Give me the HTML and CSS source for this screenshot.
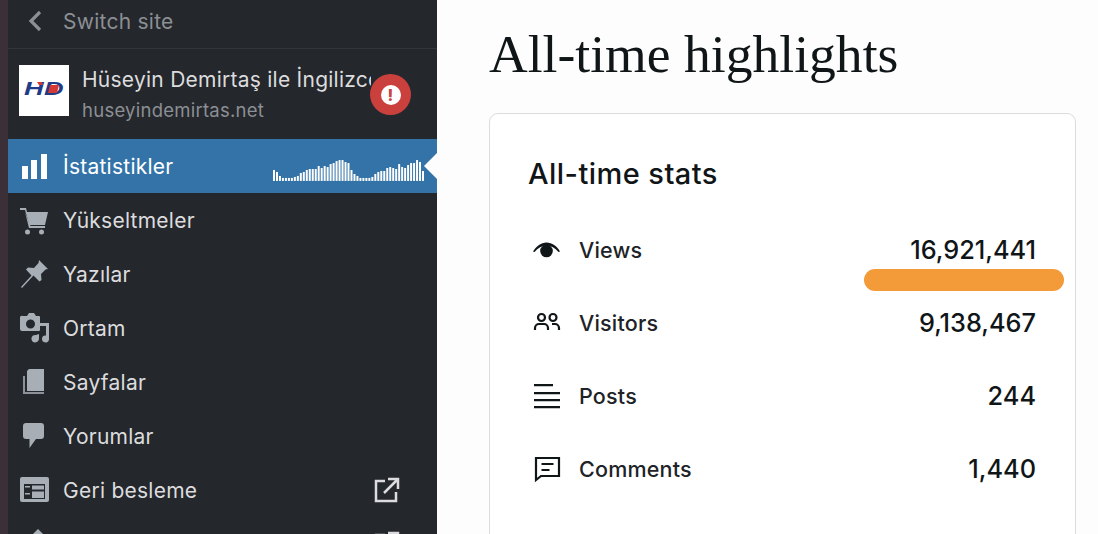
FILE: index.html
```html
<!DOCTYPE html>
<html lang="tr">
<head>
<meta charset="utf-8">
<title>All-time highlights</title>
<link rel="stylesheet" href="styles.css">
</head>
<body>
<div class="strip"></div>
<nav class="sidebar">
  <div class="switch">
    <svg class="chev" viewBox="0 0 14 22"><path d="M12 2 3 11l9 9" fill="none" stroke="currentColor" stroke-width="3.200"/></svg>
    <span>Switch site</span>
  </div>
  <div class="site">
    <div class="logo">
      <svg viewBox="0 0 50 51" class="logo-svg"><text x="5" y="30" textLength="40" lengthAdjust="spacingAndGlyphs" class="logo-text">HD</text><path d="M31 20h9l-2 8h-9zM18 17h5l1 3h-4z" fill="#d43a35"/></svg>
    </div>
    <div class="site-text">
      <div class="site-name">Hüseyin Demirtaş ile İngilizce</div>
      <div class="site-url">huseyindemirtas.net</div>
    </div>
    <div class="alert"><span class="alert-dot">!</span></div>
  </div>
  <div class="item active">
    <svg class="ico" viewBox="0 0 30 30"><path d="M2 15h6v13H2zM11 9h6v19h-6zM21 3h6v25h-6z" fill="#fff"/></svg>
    <span class="label">İstatistikler</span>
    <svg class="spark" viewBox="0 0 152 22" fill="#fff">
      <rect x="0" y="11" width="2" height="11"/><rect x="3" y="13" width="2" height="9"/><rect x="6" y="17" width="2" height="5"/><rect x="9" y="19" width="2" height="3"/><rect x="12" y="19" width="2" height="3"/><rect x="15" y="19" width="2" height="3"/><rect x="18" y="19" width="2" height="3"/><rect x="21" y="18" width="2" height="4"/><rect x="24" y="17" width="2" height="5"/><rect x="27" y="14" width="2" height="8"/><rect x="30" y="13" width="2" height="9"/><rect x="33" y="11" width="2" height="11"/><rect x="36" y="10" width="2" height="12"/><rect x="39" y="10" width="2" height="12"/><rect x="42" y="10" width="2" height="12"/><rect x="45" y="7" width="2" height="15"/><rect x="48" y="9" width="2" height="13"/><rect x="51" y="7" width="2" height="15"/><rect x="54" y="8" width="2" height="14"/><rect x="57" y="5" width="2" height="17"/><rect x="60" y="4" width="2" height="18"/><rect x="63" y="2" width="2" height="20"/><rect x="66" y="1" width="2" height="21"/><rect x="69" y="1" width="2" height="21"/><rect x="72" y="3" width="2" height="19"/><rect x="75" y="4" width="2" height="18"/><rect x="78" y="11" width="2" height="11"/><rect x="81" y="15" width="2" height="7"/><rect x="84" y="17" width="2" height="5"/><rect x="87" y="19" width="2" height="3"/><rect x="90" y="19" width="2" height="3"/><rect x="93" y="19" width="2" height="3"/><rect x="96" y="19" width="2" height="3"/><rect x="99" y="18" width="2" height="4"/><rect x="102" y="15" width="2" height="7"/><rect x="105" y="13" width="2" height="9"/><rect x="108" y="12" width="2" height="10"/><rect x="111" y="12" width="2" height="10"/><rect x="114" y="9" width="2" height="13"/><rect x="117" y="8" width="2" height="14"/><rect x="120" y="9" width="2" height="13"/><rect x="123" y="10" width="2" height="12"/><rect x="126" y="5" width="2" height="17"/><rect x="129" y="8" width="2" height="14"/><rect x="132" y="9" width="2" height="13"/><rect x="135" y="6" width="2" height="16"/><rect x="138" y="4" width="2" height="18"/><rect x="141" y="4" width="2" height="18"/><rect x="144" y="1" width="2" height="21"/><rect x="147" y="3" width="2" height="19"/><rect x="150" y="12" width="2" height="10"/>
    </svg>
    <span class="notch"></span>
  </div>
  <div class="item">
    <svg class="ico" viewBox="0 0 30 30"><path d="M0 3h6l1 4h21l-3 13H9.500L5 5H0z" fill="currentColor"/><path d="M5 7 9 23h16v-2H10.500" fill="currentColor"/><circle cx="7.500" cy="27" r="2.500" fill="currentColor"/><circle cx="21.500" cy="27" r="2.500" fill="currentColor"/></svg>
    <span class="label">Yükseltmeler</span>
  </div>
  <div class="item">
    <svg class="ico" viewBox="0 0 30 30"><path d="M19 1l9 9-2.500.5L21 15l.5 6-2 1.500-6-6L2 29l-1-1 10.500-11.500L6 10.500 8 8.500l6 .5 4.500-5z" fill="currentColor"/></svg>
    <span class="label">Yazılar</span>
  </div>
  <div class="item">
    <svg class="ico" viewBox="0 0 30 30"><path fill-rule="evenodd" d="M3 3h4l2-3h5l2 3h3a1 1 0 0 1 1 1v13a1 1 0 0 1-1 1H2a2 2 0 0 1-2-2V5a2 2 0 0 1 3-2zm7.500 3.500a4.500 4.500 0 1 0 0 9 4.500 4.500 0 0 0 0-9z" fill="currentColor"/><path d="M20 10h9v16a3.500 3.500 0 1 1-3-3.500V13h-6z" fill="currentColor"/><path d="M19 21v4.500a3.800 3.800 0 1 1-3-3.500z" fill="currentColor"/></svg>
    <span class="label">Ortam</span>
  </div>
  <div class="item">
    <svg class="ico" viewBox="0 0 30 30"><path d="M9 2h15v22H7V4z" fill="currentColor"/><path d="M3 9h2v16h19v2H3z" fill="currentColor" opacity=".8"/></svg>
    <span class="label">Sayfalar</span>
  </div>
  <div class="item">
    <svg class="ico" viewBox="0 0 30 30"><path d="M6 2h15a3 3 0 0 1 3 3v10a3 3 0 0 1-3 3h-5l-6.500 9v-9H6a3 3 0 0 1-3-3V5a3 3 0 0 1 3-3z" fill="currentColor"/></svg>
    <span class="label">Yorumlar</span>
  </div>
  <div class="item">
    <svg class="ico" viewBox="0 0 30 30"><rect x="0" y="2" width="29" height="25" rx="2" fill="currentColor"/><rect x="4" y="9" width="21" height="15" fill="#24272c"/><path d="M12 10.500h12v4H12zM12 16.500h12V23H12zM5 11h5v1.500H5zM5 18h5v1.500H5z" fill="currentColor"/></svg>
    <span class="label">Geri besleme</span>
    <svg class="ext" viewBox="0 0 26 26"><path d="M11 4H2v20h20v-9M14 2h10v10M24 2 10 16" fill="none" stroke="currentColor" stroke-width="2.500"/></svg>
  </div>
  <div class="item">
    <svg class="ico" viewBox="0 0 30 30"><path d="M18 0l7 7-5 5-7-7z" fill="currentColor"/></svg>
    <span class="label"></span>
    <svg class="ext" viewBox="0 0 26 26"><path d="M11 4H2v20h20v-9M14 2h10v10M24 2 10 16" fill="none" stroke="currentColor" stroke-width="2.500"/></svg>
  </div>
</nav>
<main class="main">
  <h1 class="title">All-time highlights</h1>
  <section class="card">
    <h2 class="card-title">All-time stats</h2>
    <div class="row">
      <svg class="row-ico" viewBox="0 0 28 28"><path d="M0 15.500C3.500 10 8 6.500 13.500 6.500S24 10 27 15.500l-1.500.5C22 12 18 9.500 13.500 9.500S5 12 1.500 16z" fill="#101517"/><circle cx="13.500" cy="15" r="6.300" fill="#101517"/></svg>
      <span class="row-label">Views</span>
      <span class="row-value">16,921,441</span>
      <span class="redact"></span>
    </div>
    <div class="row">
      <svg class="row-ico" viewBox="0 0 28 28" fill="none" stroke="#101517" stroke-width="2.200"><circle cx="8.500" cy="8.500" r="3.500"/><circle cx="20" cy="8.500" r="3.500"/><path d="M2 21v-2a4 4 0 0 1 4-4h5a4 4 0 0 1 4 4v2M19 15h3a4 4 0 0 1 4 4v2"/></svg>
      <span class="row-label">Visitors</span>
      <span class="row-value">9,138,467</span>
    </div>
    <div class="row">
      <svg class="row-ico" viewBox="0 0 28 28" fill="#101517"><path d="M1 2h19v2.200H1zM1 10h26v2.200H1zM1 17h26v2.200H1zM1 24h26v2.200H1z"/></svg>
      <span class="row-label">Posts</span>
      <span class="row-value">244</span>
    </div>
    <div class="row">
      <svg class="row-ico" viewBox="0 0 28 28" fill="none" stroke="#101517" stroke-width="2.200"><path d="M3 3h23v18H8l-5 4z"/><path d="M8.500 9h12M8.500 15h8"/></svg>
      <span class="row-label">Comments</span>
      <span class="row-value">1,440</span>
    </div>
  </section>
</main>
</body>
</html>
```
FILE: styles.css
```css
* { box-sizing: border-box; }
html, body { margin: 0; height: 534px; overflow: hidden; }
body {
  display: flex;
  width: 1098px;
  background: #fdfdfd;
  font-family: Inter, "Liberation Sans", sans-serif;
}
.strip { width: 8px; flex: none; background: #3b2f38; }
.sidebar {
  width: 429px;
  flex: none;
  height: 534px;
  overflow: hidden;
  background: #24272c;
  color: #dcdcde;
  font-size: 21px;
  letter-spacing: .25px;
}
.switch {
  height: 49px;
  display: flex;
  align-items: center;
  padding: 0 0 6px 20px;
  gap: 21px;
  border-bottom: 1px solid #33353a;
  color: #8c8f94;
}
.chev { width: 14px; height: 22px; flex: none; }
.site {
  height: 90px;
  display: flex;
  align-items: center;
  padding-left: 11px;
  position: relative;
  padding-bottom: 2px;
}
.logo { width: 50px; height: 51px; background: #fff; flex: none; margin-bottom: 6px; }
.logo-svg { display: block; width: 50px; height: 51px; }
.logo-text {
  font-family: "Liberation Sans", sans-serif;
  font-size: 19px;
  font-weight: 700;
  font-style: italic;
  fill: #1f3c88;
}
.site-text { margin: 3px 0 0 13px; width: 289px; overflow: hidden; white-space: nowrap; }
.site-name { color: #dcdcde; line-height: 29px; }
.site-url { color: #8c8f94; font-size: 18.500px; line-height: 27px; margin-top: 3px; }
.alert {
  position: absolute;
  left: 362px;
  top: 25px;
  width: 41px;
  height: 41px;
  border-radius: 50%;
  background: #c9403d;
  display: flex;
  align-items: center;
  justify-content: center;
}
.alert-dot {
  width: 20px;
  height: 20px;
  border-radius: 50%;
  background: #fff;
  color: #c9403d;
  font-size: 16px;
  font-weight: 800;
  line-height: 20px;
  text-align: center;
}
.item {
  height: 54px;
  display: flex;
  align-items: center;
  padding-left: 12px;
  position: relative;
  color: #a7aeb6;
}
.item .label { color: #dcdcde; margin-left: 13px; }
.ico { width: 30px; height: 30px; flex: none; }
.item.active { background: #3373a8; }
.item.active .label { color: #fff; }
.spark {
  position: absolute;
  left: 265px;
  top: 20px;
  width: 151px;
  height: 22px;
}
.notch {
  position: absolute;
  right: 0;
  top: 14px;
  border-style: solid;
  border-width: 13px 13px 13px 0;
  border-color: transparent #fdfdfd transparent transparent;
}
.ext {
  position: absolute;
  left: 366px;
  top: 14px;
  width: 26px;
  height: 26px;
  color: #dcdcde;
}
.main { flex: 1; padding: 0 22px 0 52px; min-width: 0; }
.title {
  margin: 22px 0 0;
  font-family: "Liberation Serif", serif;
  font-weight: 400;
  font-size: 53.600px;
  line-height: 64px;
  color: #101517;
}
.card {
  margin-top: 27px;
  height: 480px;
  background: #fff;
  border: 1px solid #dcdcde;
  border-radius: 9px;
  padding: 40px 38px 0;
}
.card-title {
  margin: 0 0 22px;
  font-size: 29px;
  font-weight: 500;
  letter-spacing: .45px;
  line-height: 40px;
  color: #101517;
}
.row {
  height: 73px;
  display: flex;
  align-items: center;
  position: relative;
  padding-bottom: 6px;
  font-size: 21.500px;
}
.row-ico { width: 28px; height: 28px; flex: none; margin-left: 5px; }
.row-label { margin-left: 18px; color: #1d2327; font-weight: 500; letter-spacing: .2px; }
.row-value { margin: 0 1px 0 auto; color: #101517; font-size: 25.300px; font-weight: 500; }
.redact {
  position: absolute;
  right: -27px;
  top: 53px;
  width: 200px;
  height: 22px;
  border-radius: 11px;
  background: #f29b38;
}
```
